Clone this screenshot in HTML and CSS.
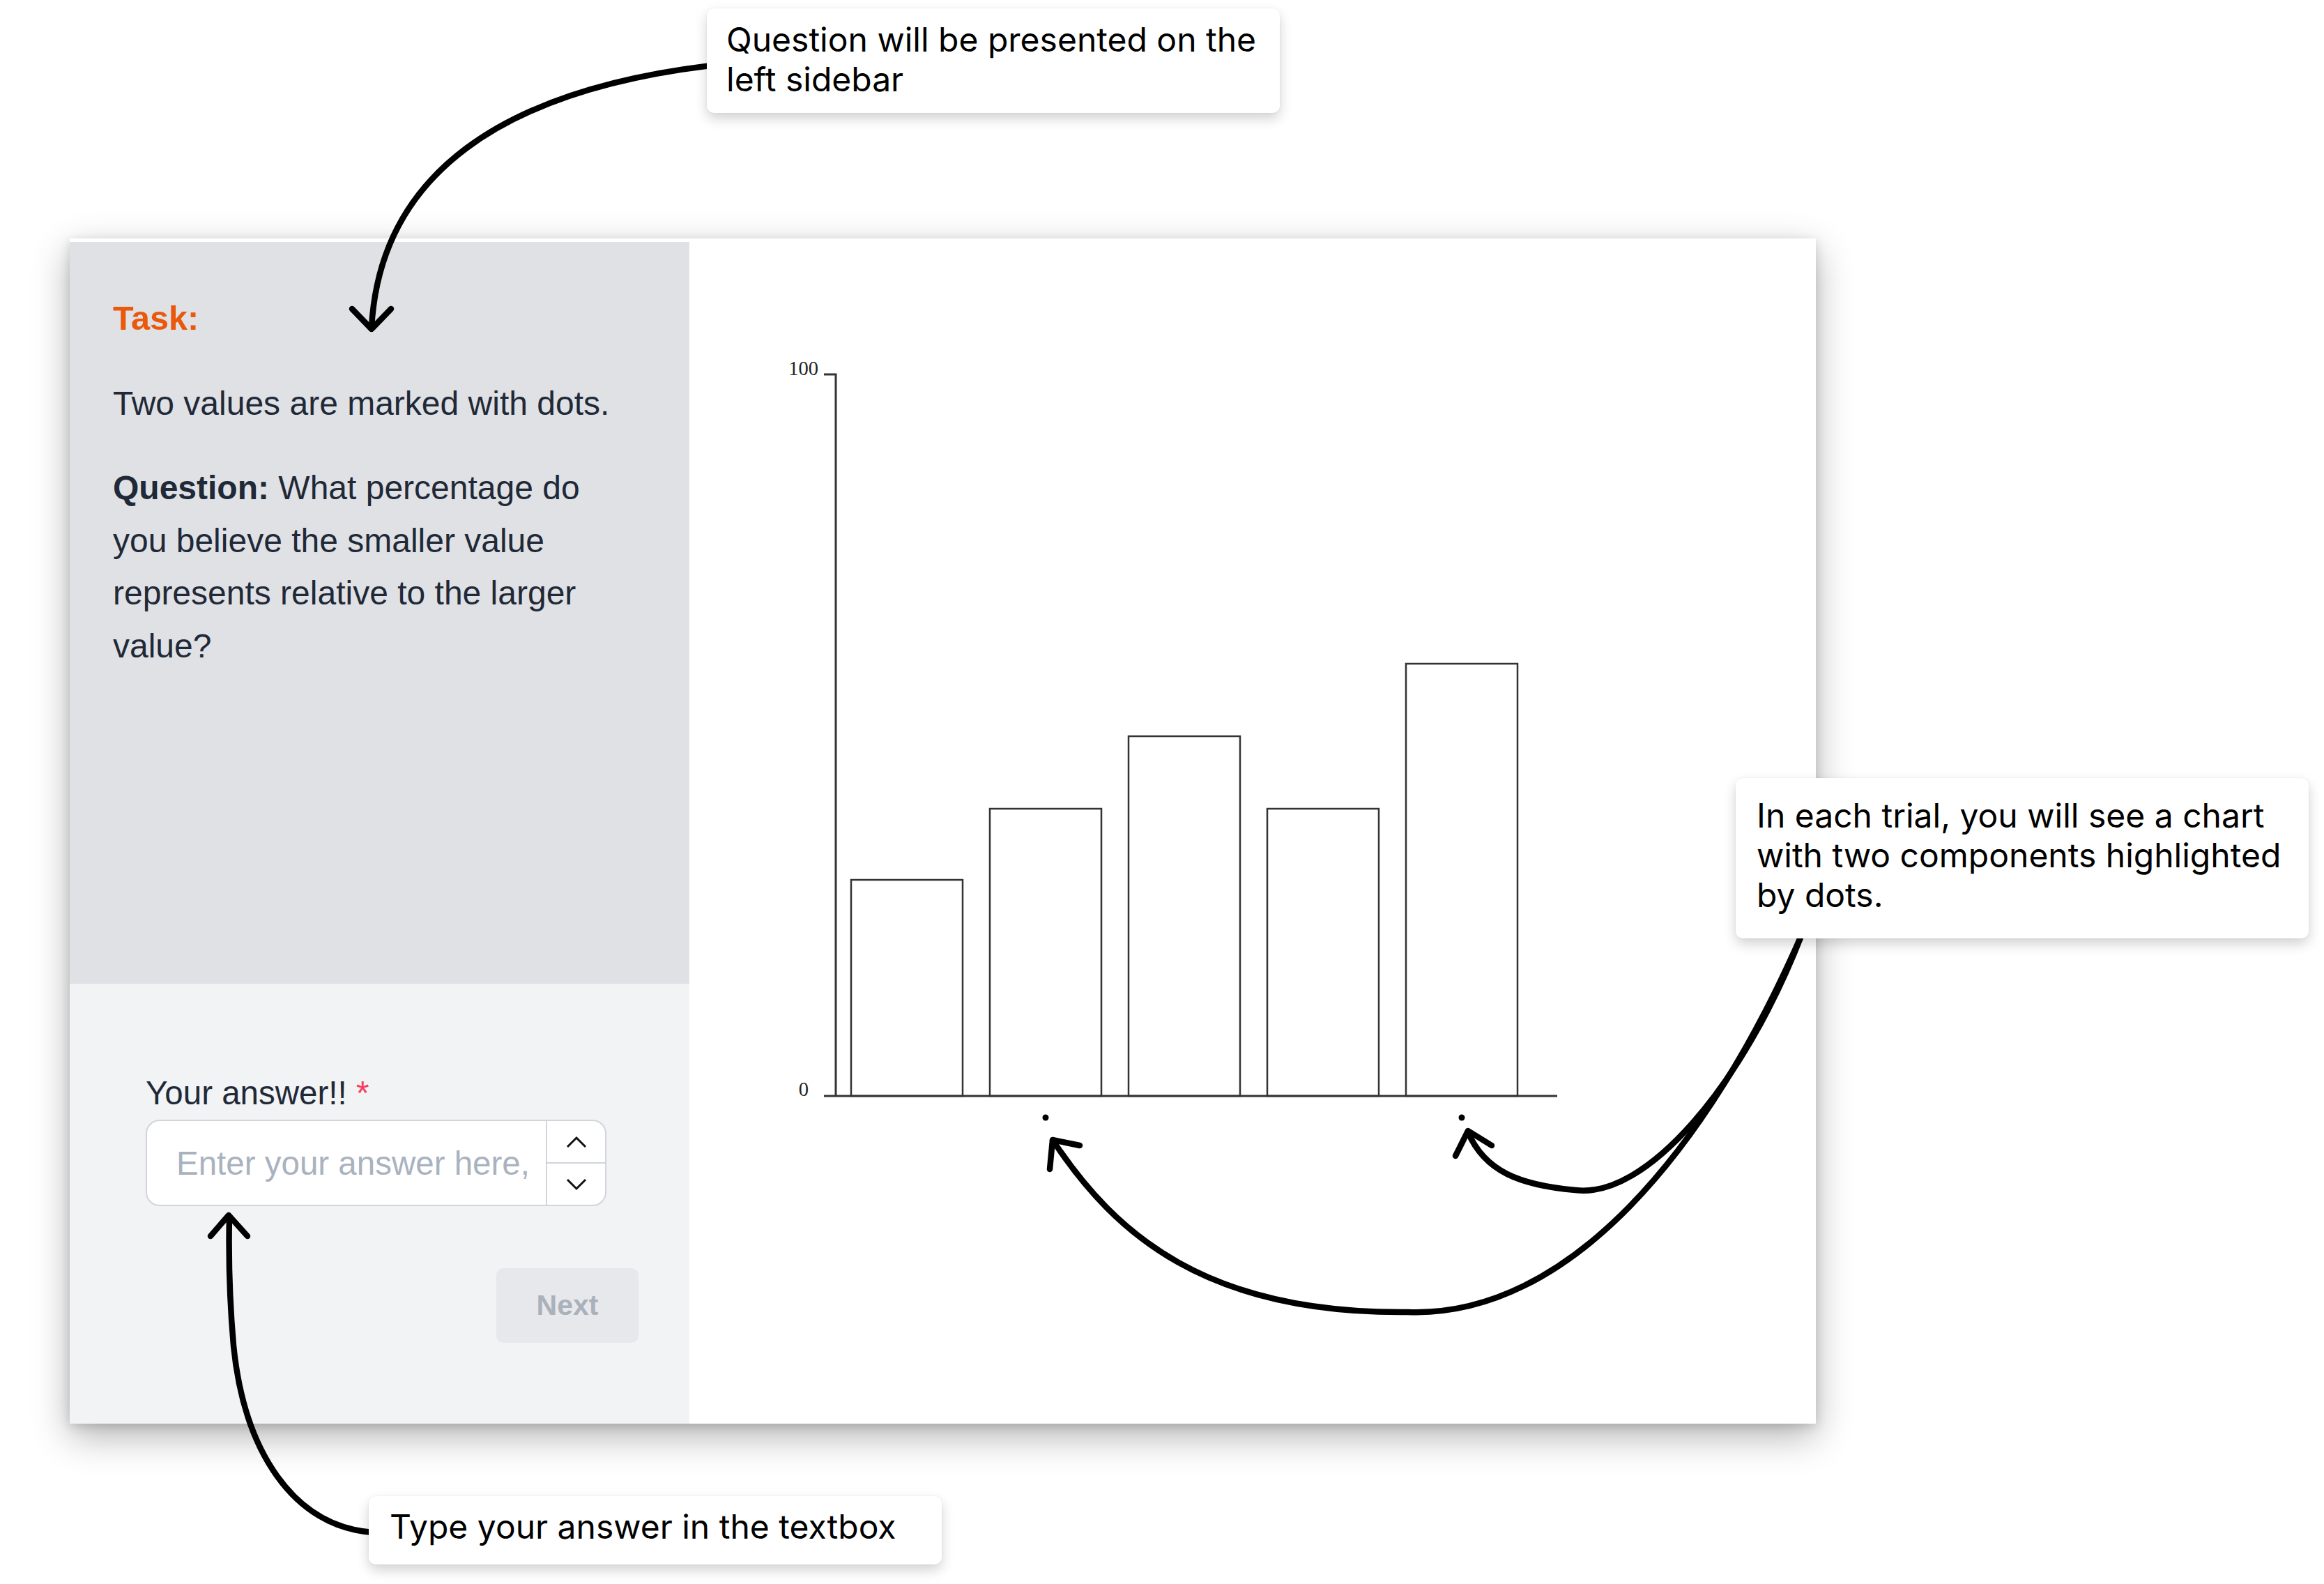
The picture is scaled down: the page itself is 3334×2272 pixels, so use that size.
FILE: index.html
```html
<!DOCTYPE html>
<html lang="en">
<head>
    <meta charset="UTF-8">
    <title>Chart Trial | Onboarding</title>
    <link rel="stylesheet" href="styles.css">
</head>
<body>
    <div class="canvas">
        <!-- Trial screen -->
        <div class="card">
            <aside class="sidebar">
                <div class="task-panel">
                    <h3 class="task-title">Task:</h3>
                    <p>Two values are marked with dots.</p>
                    <p><strong>Question:</strong> What percentage do you believe the smaller value represents relative to the larger value?</p>
                </div>
                <form class="answer-panel">
                    <label class="answer-label" for="answer">Your answer!! <span class="required">*</span></label>
                    <div class="number-input">
                        <input id="answer" type="text" placeholder="Enter your answer here,">
                        <div class="spinner">
                            <button type="button">
                                <svg width="30" height="18" viewBox="0 0 30 18"><path d="M2 16 L15 3 L28 16" /></svg>
                            </button>
                            <button type="button">
                                <svg width="30" height="18" viewBox="0 0 30 18"><path d="M2 2 L15 15 L28 2" /></svg>
                            </button>
                        </div>
                    </div>
                    <div class="actions">
                        <button type="button" class="next-btn">Next</button>
                    </div>
                </form>
            </aside>
            <main class="chart-panel">
                <svg class="chart" width="1616" height="1695" viewBox="0 0 1616 1695">
                    <g class="bars">
                        <rect x="232" y="915" width="160" height="310" />
                        <rect x="431" y="813" width="160" height="412" />
                        <rect x="630" y="709" width="160" height="516" />
                        <rect x="829" y="813" width="160" height="412" />
                        <rect x="1028" y="605" width="160" height="620" />
                    </g>
                    <path class="axis" d="M193 190 H210 V1225" />
                    <path class="axis" d="M193 1225 H1245" />
                    <text class="tick" x="185" y="191" text-anchor="end">100</text>
                    <text class="tick" x="171" y="1225" text-anchor="end">0</text>
                    <circle cx="511" cy="1256" r="4.5" />
                    <circle cx="1108" cy="1256" r="4.5" />
                </svg>
            </main>
        </div>

        <!-- Annotations -->
        <svg class="arrows" width="3334" height="2272" viewBox="0 0 3334 2272">
            <path d="M1020,94 C720,130 545,250 533,470" />
            <path d="M505,443 L533,472 L561,443" />
            <path d="M535,2198 C420,2190 350,2080 335,1930 C328,1850 328,1790 329,1745" />
            <path d="M302,1773 L328,1743 L355,1773" />
            <path d="M2585,1340 C2450,1650 2250,1890 2020,1882 C1730,1885 1600,1770 1512,1638" />
            <path d="M1506,1677 L1510,1635 L1549,1643" />
            <path d="M2585,1340 C2500,1560 2360,1720 2260,1707 C2180,1700 2130,1680 2106,1624" />
            <path d="M2088,1658 L2106,1622 L2140,1643" />
        </svg>
        <div class="callout callout-question">Question will be presented on the<br>left sidebar</div>
        <div class="callout callout-chart">In each trial, you will see a chart<br>with two components highlighted<br>by dots.</div>
        <div class="callout callout-input">Type your answer in the textbox</div>
    </div>
</body>
</html>
```

FILE: styles.css
```css
/* General styling */
* {
    margin: 0;
    padding: 0;
    box-sizing: border-box;
}
body {
    font-family: 'Liberation Sans', Arial, sans-serif;
    background-color: #ffffff;
    color: #1f2937;
}
.canvas {
    position: relative;
    width: 3334px;
    height: 2272px;
    padding: 342px 0 0 100px;
    overflow: hidden;
}

/* Trial card */
.card {
    display: flex;
    width: 2505px;
    height: 1700px;
    border-top: 5px solid #ffffff;
    background-color: #ffffff;
    box-shadow: 0 18px 50px rgba(0, 0, 0, 0.3), 0 4px 14px rgba(0, 0, 0, 0.14);
}

/* Sidebar */
.sidebar {
    width: 889px;
    display: flex;
    flex-direction: column;
}
.task-panel {
    flex: 1;
    background-color: #dfe1e5;
    padding: 72px 90px 0 62px;
    font-size: 48px;
    line-height: 75.5px;
}
.task-title {
    font-size: 48.5px;
    color: #ea580c;
    font-weight: bold;
}
.task-panel p {
    margin-top: 46px;
}

.answer-panel {
    height: 631px;
    background-color: #f2f3f5;
    padding: 129px 73px 0 109px;
}
.answer-label {
    display: block;
    font-size: 47.5px;
    line-height: 56px;
    margin-bottom: 10px;
}
.required {
    color: #f43f5e;
}
.number-input {
    display: flex;
    width: 661px;
    height: 124px;
    border: 2px solid #d1d5db;
    border-radius: 20px;
    background-color: #ffffff;
    overflow: hidden;
}
.number-input input {
    flex: 1;
    min-width: 0;
    border: none;
    outline: none;
    background: transparent;
    padding-left: 42px;
    font-family: inherit;
    font-size: 47.5px;
    color: #1f2937;
}
.number-input input::placeholder {
    color: #a9b2bf;
}
.spinner {
    width: 85px;
    border-left: 2px solid #d1d5db;
    display: flex;
    flex-direction: column;
}
.spinner button {
    flex: 1;
    border: none;
    background: none;
    display: flex;
    align-items: center;
    justify-content: center;
}
.spinner button + button {
    border-top: 2px solid #d1d5db;
}
.spinner svg path {
    fill: none;
    stroke: #111111;
    stroke-width: 3;
}
.actions {
    display: flex;
    justify-content: flex-end;
    margin-top: 89px;
}
.next-btn {
    width: 204px;
    height: 107px;
    border: none;
    border-radius: 10px;
    background-color: #e6e8eb;
    color: #aab1bb;
    font-family: inherit;
    font-size: 41px;
    font-weight: bold;
}

/* Chart */
.chart-panel {
    flex: 1;
    background-color: #ffffff;
}
.chart {
    display: block;
}
.chart .bars rect {
    fill: #ffffff;
    stroke: #333333;
    stroke-width: 2.5;
}
.chart .axis {
    fill: none;
    stroke: #333333;
    stroke-width: 3;
}
.chart .tick {
    font-family: 'Liberation Serif', 'Times New Roman', serif;
    font-size: 28.5px;
    fill: #222222;
}
.chart circle {
    fill: #000000;
}

/* Annotations */
.arrows {
    position: absolute;
    top: 0;
    left: 0;
    pointer-events: none;
}
.arrows path {
    fill: none;
    stroke: #000000;
    stroke-width: 8.5;
    stroke-linecap: round;
    stroke-linejoin: round;
}
.callout {
    position: absolute;
    width: 822px;
    background-color: #ffffff;
    border-radius: 10px;
    box-shadow: 0 8px 18px rgba(0, 0, 0, 0.18), 0 0 3px rgba(0, 0, 0, 0.06);
    font-family: Inter, 'Noto Sans', sans-serif;
    font-size: 48px;
    line-height: 57px;
    color: #000000;
    padding: 16px 28px 20px;
}
.callout-question {
    left: 1014px;
    top: 12px;
}
.callout-chart {
    left: 2490px;
    top: 1116px;
    padding: 25px 30px 34px;
}
.callout-input {
    left: 529px;
    top: 2146px;
    padding: 15px 30px 26px;
}
```
